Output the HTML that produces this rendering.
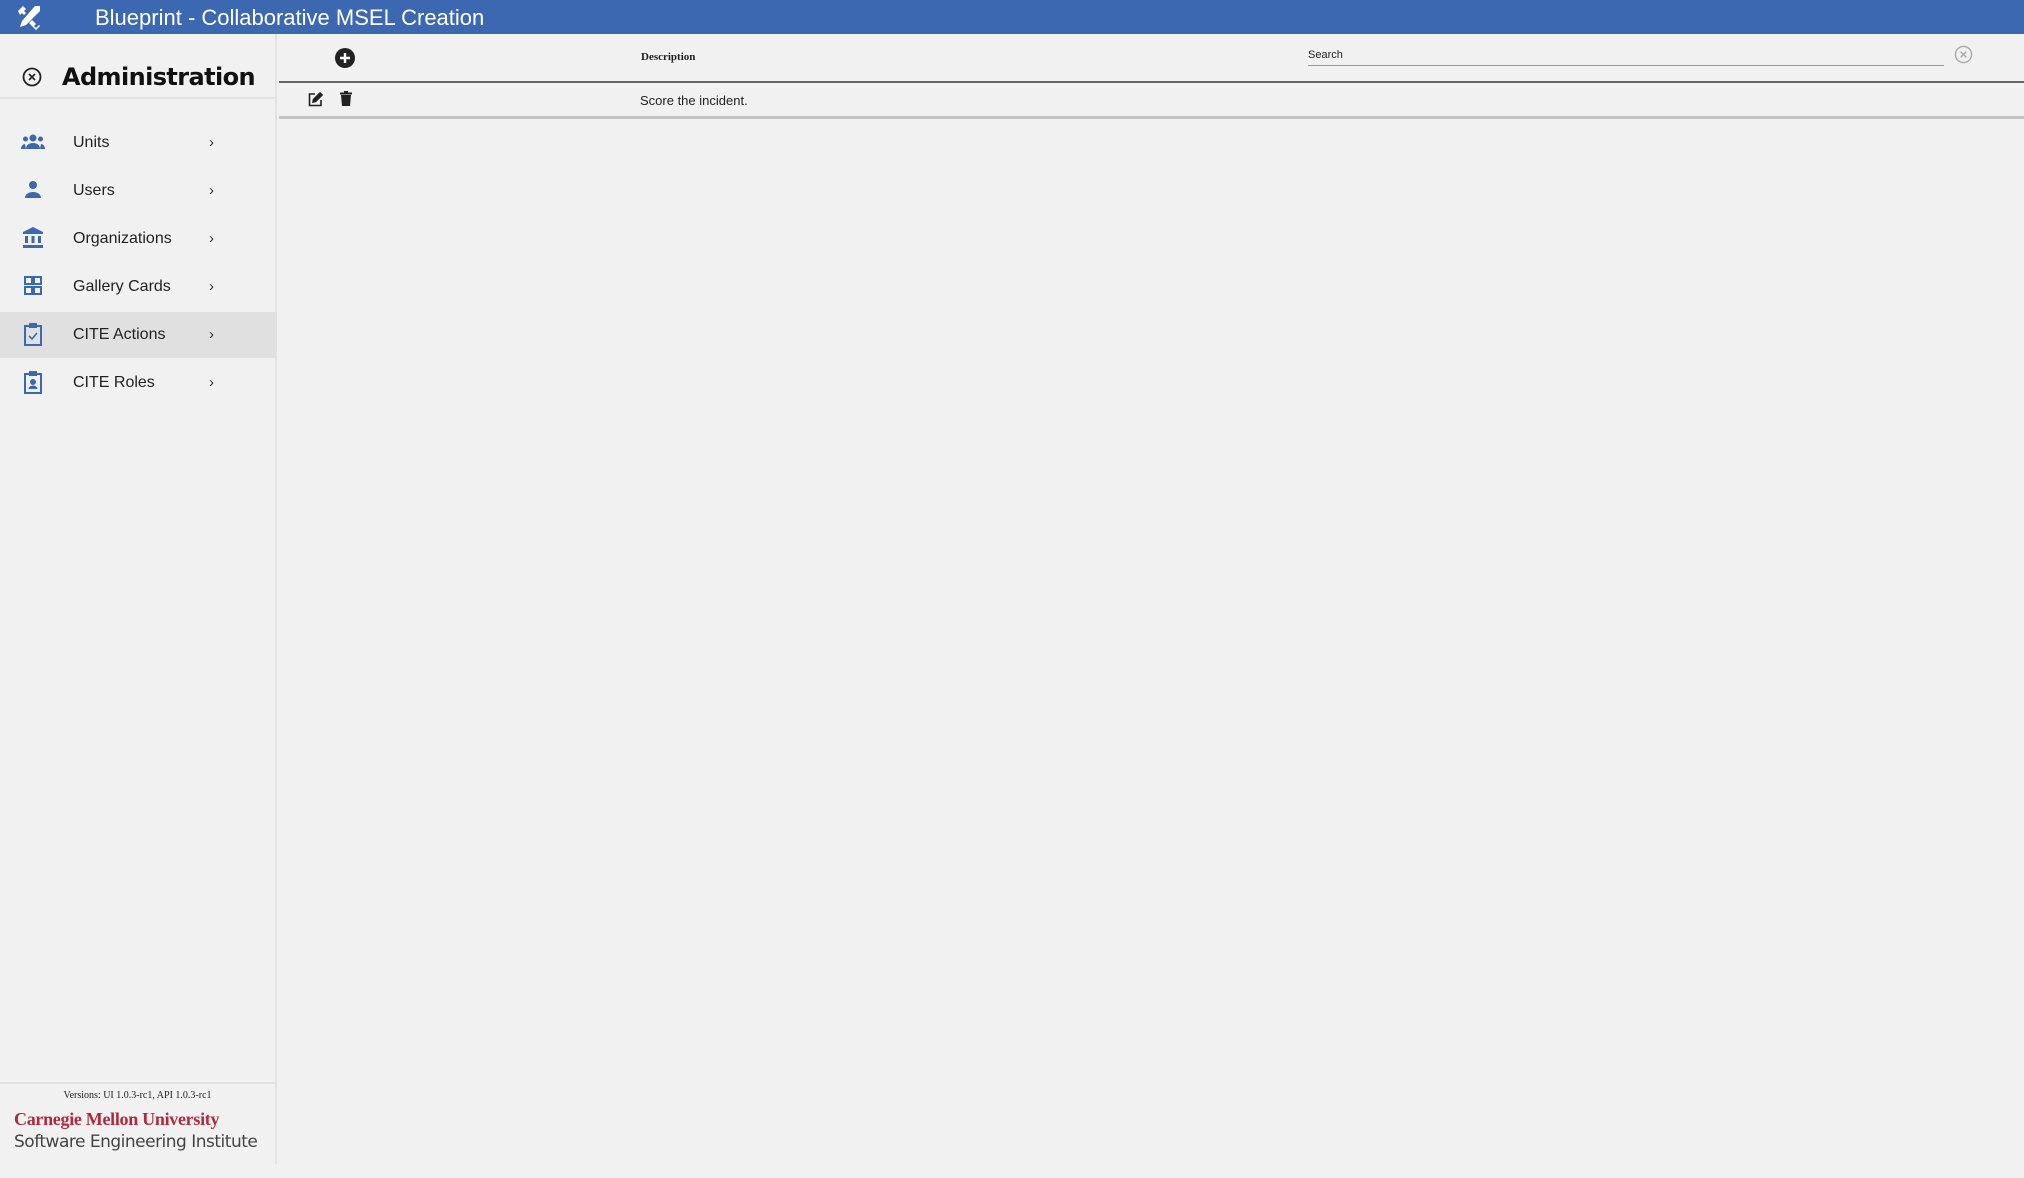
<!DOCTYPE html>
<html><head><meta charset="utf-8"><style>
*{margin:0;padding:0;box-sizing:border-box}
body{width:2024px;height:1178px;background:#f1f1f1;font-family:"Liberation Sans",sans-serif;position:relative;overflow:hidden;color:#222}
.hdr{position:absolute;left:0;top:0;width:2024px;height:34px;background:#3c67b1;color:#fff}
.hdr .t{position:absolute;left:95px;top:5px;font-size:22px}
.side{position:absolute;left:0;top:34px;width:277px;height:1130px;border-right:2px solid #e2e2e2;background:#f1f1f1}
.adm{position:absolute;left:62px;top:29px;font-family:"DejaVu Sans",sans-serif;font-weight:bold;font-size:24px;letter-spacing:-0.6px;color:#111}
.dv{position:absolute;left:0;top:63px;width:275px;height:2px;background:#e3e3e3}
.it{position:absolute;left:0;width:275px;height:46px}
.it .l{position:absolute;left:73px;top:14px;font-size:16px;color:#222}
.it .c{position:absolute;left:209px;top:14px;font-size:15px;color:#333}
.it svg{position:absolute;left:21px;top:11px}
.sel{background:#e0e0e0}
.ft{position:absolute;left:0;top:1048px;width:275px;border-top:2px solid #e2e2e2}
.ver{font-family:"Liberation Serif",serif;font-size:10px;text-align:center;padding-top:6px;height:21px;background:#f1f1f1}
.cmu{position:absolute;left:14px;top:25px;font-family:"Liberation Serif",serif;font-weight:bold;font-size:18px;color:#b02a3c;letter-spacing:-0.3px}
.sei{position:absolute;left:14px;top:48px;font-family:"DejaVu Sans",sans-serif;font-size:17px;color:#444;white-space:nowrap;letter-spacing:-0.5px}
.line{position:absolute;left:279px;top:81px;width:1745px;height:2px;background:#666}
.row{position:absolute;left:279px;top:83px;width:1745px;height:36px;border-bottom:3px solid #c4c4c4}
</style></head><body>
<div class="hdr">
<svg style="position:absolute;left:15px;top:3px" width="28" height="28" viewBox="0 0 28 28" fill="#fff"><path d="M3 8l5-5 3 3-2 2 2 2-2 2-2-2-2 2z"/><path d="M20 3l5 0 0 5-14 14-6 2 2-6z"/><path d="M17 17l4 4-2 2 2 2 3-3 1 1-4 4-7-7z"/></svg>
<div class="t">Blueprint - Collaborative MSEL Creation</div></div>
<div class="side">
<svg style="position:absolute;left:22px;top:33px" width="20" height="20" viewBox="0 0 20 20"><circle cx="10" cy="10" r="8.5" fill="none" stroke="#222" stroke-width="1.8"/><path d="M7 7l6 6M13 7l-6 6" stroke="#222" stroke-width="1.6"/></svg>
<div class="adm">Administration</div>
<div class="dv"></div>
<div class="it" style="top:86px"><svg width="24" height="22" viewBox="0 0 24 22" fill="#3c67b1"><circle cx="12" cy="7" r="3.5"/><circle cx="4.5" cy="8" r="2.5"/><circle cx="19.5" cy="8" r="2.5"/><path d="M5 18c0-4 3-6 7-6s7 2 7 6z"/><path d="M0 18c0-3 2-5 4-5l1 5zM24 18c0-3-2-5-4-5l-1 5z"/></svg><span class="l">Units</span><span class="c">›</span></div>
<div class="it" style="top:134px"><svg width="24" height="22" viewBox="0 0 24 22" fill="#3c67b1"><circle cx="12" cy="6" r="4"/><path d="M4 19c0-4 4-6 8-6s8 2 8 6z"/></svg><span class="l">Users</span><span class="c">›</span></div>
<div class="it" style="top:182px"><svg width="24" height="22" viewBox="0 0 24 22" fill="#3c67b1"><path d="M12 0L2 5v2h20V5z"/><rect x="4" y="9" width="3" height="7"/><rect x="10.5" y="9" width="3" height="7"/><rect x="17" y="9" width="3" height="7"/><rect x="2" y="18" width="20" height="3"/></svg><span class="l">Organizations</span><span class="c">›</span></div>
<div class="it" style="top:230px"><svg width="24" height="22" viewBox="0 0 24 22" fill="none" stroke="#3c67b1" stroke-width="2"><rect x="4" y="2" width="7" height="7"/><rect x="13" y="2" width="7" height="7"/><rect x="4" y="12" width="7" height="7"/><rect x="13" y="12" width="7" height="7"/></svg><span class="l">Gallery Cards</span><span class="c">›</span></div>
<div class="it sel" style="top:278px"><svg width="24" height="24" viewBox="0 0 24 24" fill="none" stroke="#3c67b1" stroke-width="2"><rect x="4" y="3" width="16" height="19"/><rect x="9" y="1" width="6" height="3" fill="#3c67b1"/><path d="M8 13l3 3 5-6" stroke-width="1.6"/></svg><span class="l">CITE Actions</span><span class="c">›</span></div>
<div class="it" style="top:326px"><svg width="24" height="24" viewBox="0 0 24 24" fill="none" stroke="#3c67b1" stroke-width="2"><rect x="4" y="3" width="16" height="19"/><rect x="9" y="1" width="6" height="3" fill="#3c67b1"/><circle cx="12" cy="11" r="2" fill="#3c67b1"/><path d="M8 18c0-2 2-3 4-3s4 1 4 3" fill="#3c67b1" stroke-width="1"/></svg><span class="l">CITE Roles</span><span class="c">›</span></div>
<div class="ft"><div class="ver">Versions: UI 1.0.3-rc1, API 1.0.3-rc1</div>
<div class="cmu">Carnegie Mellon University</div><div class="sei">Software Engineering Institute</div></div>
</div>
<svg style="position:absolute;left:335px;top:48px" width="20" height="20" viewBox="0 0 20 20"><circle cx="10" cy="10" r="10" fill="#222"/><path d="M10 5v10M5 10h10" stroke="#fff" stroke-width="2.4"/></svg>
<div style="position:absolute;left:641px;top:51px;font-family:'Liberation Serif',serif;font-weight:bold;font-size:11px">Description</div>
<div style="position:absolute;left:1308px;top:49px;font-size:11px">Search</div>
<div style="position:absolute;left:1308px;top:65px;width:636px;height:1px;background:#999"></div>
<svg style="position:absolute;left:1954px;top:45px" width="19" height="19" viewBox="0 0 20 20"><circle cx="10" cy="10" r="8.5" fill="none" stroke="#aaa" stroke-width="1.5"/><path d="M7 7l6 6M13 7l-6 6" stroke="#aaa" stroke-width="1.5"/></svg>
<div class="line"></div>
<div class="row">
<svg style="position:absolute;left:29px;top:9px" width="15" height="15" viewBox="0 0 15 15" fill="none" stroke="#222" stroke-width="1.6"><path d="M7 2H1.5v11.5H13V8"/><path d="M5 10l.5-2.5L12 1l2 2-6.5 6.5z" fill="#222"/></svg>
<svg style="position:absolute;left:61px;top:8px" width="12" height="15" viewBox="0 0 12 15" fill="#222"><rect x="0" y="1.5" width="12" height="2"/><rect x="4" y="0" width="4" height="2"/><path d="M1 4h10l-1 11H2z"/></svg>
<div style="position:absolute;left:361px;top:10px;font-size:13px">Score the incident.</div>
</div>
</body></html>
